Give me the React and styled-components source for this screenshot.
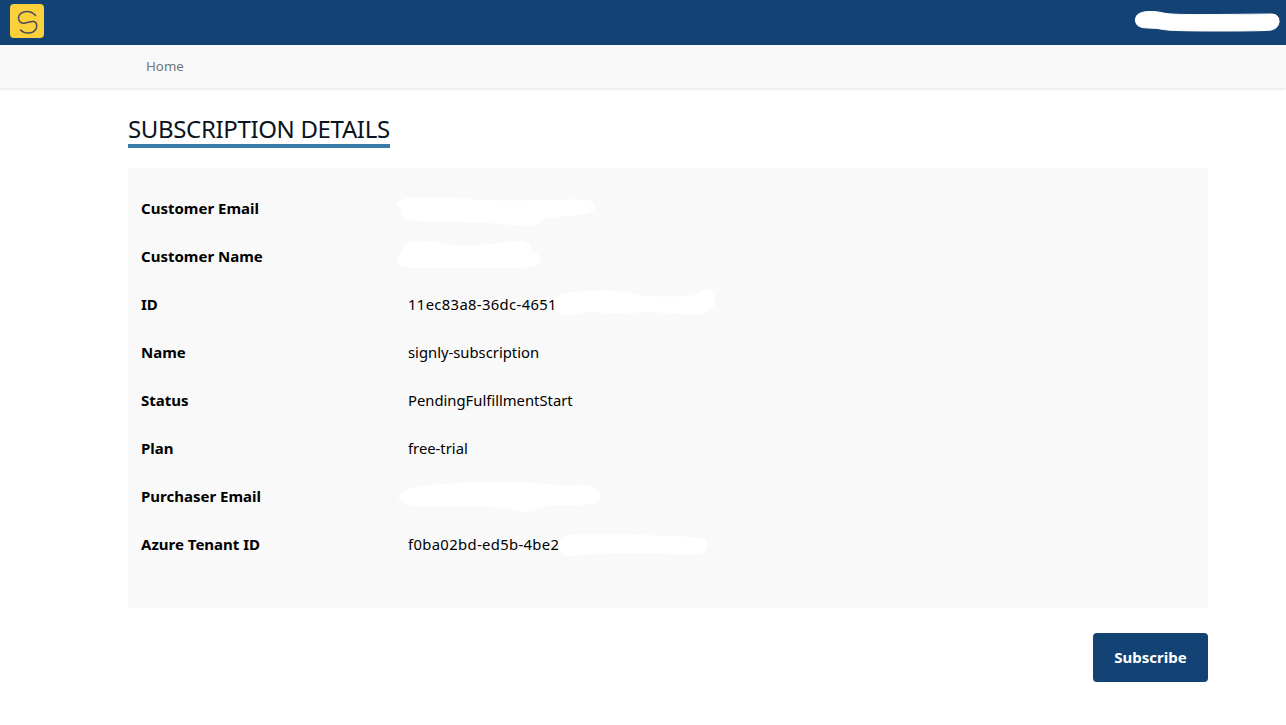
import React from "react";
import styled, { createGlobalStyle } from "styled-components";

const Global = createGlobalStyle`
  html, body { margin: 0; padding: 0; background: #fff; }
  body { font-family: "Noto Sans", "Open Sans", sans-serif; color: #000; }
`;

const Page = styled.div`
  width: 1286px;
  height: 725px;
  overflow: hidden;
  display: flex;
  flex-direction: column;
`;
const TopBar = styled.header`
  position: relative;
  height: 45px;
  flex: none;
  background: #134374;
  display: flex;
  align-items: flex-start;
  padding: 4px 10px 0;
  box-sizing: border-box;
`;
const NavBar = styled.nav`
  height: 43px;
  flex: none;
  background: #f9f9f9;
  box-shadow: 0 1px 3px rgba(0, 0, 0, 0.12);
  display: flex;
  align-items: center;
  padding: 0 0 2px 146px;
  box-sizing: border-box;
`;
const NavLink = styled.a`
  font-size: 13.3px;
  color: #6c757d;
`;
const Main = styled.main`
  padding: 26px 78px 0 128px;
  display: flex;
  flex-direction: column;
  align-items: stretch;
`;
const Title = styled.h1`
  align-self: flex-start;
  margin: 0;
  font-size: 24px;
  letter-spacing: -0.35px;
  font-weight: 400;
  line-height: 30px;
  color: #0b1220;
  border-bottom: 4px solid #3a7ca5;
`;
const Panel = styled.section`
  margin-top: 20px;
  height: 440px;
  background: #f9f9f9;
  padding-top: 16px;
  box-sizing: border-box;
`;
const Row = styled.div`
  position: relative;
  height: 48px;
  display: grid;
  grid-template-columns: 267px 1fr;
  align-items: center;
  padding: 0 0 1px 13px;
  box-sizing: border-box;
`;
const Label = styled.div`
  font-size: 15px;
  font-weight: 700;
`;
const Value = styled.div`
  font-size: 14.8px;
  font-weight: 400;
  letter-spacing: ${(p) => (p.$hex ? "0.35px" : "0")};
`;
const Mask = styled.svg`
  position: absolute;
  left: 0;
  top: 0;
  overflow: visible;
  pointer-events: none;
`;
const HeaderMask = styled.svg`
  position: absolute;
  left: 1130px;
  top: 8px;
`;
const Actions = styled.div`
  margin-top: 25px;
  display: flex;
  justify-content: flex-end;
`;
const SubscribeButton = styled.button`
  width: 115px;
  height: 49px;
  border: 0;
  border-radius: 4px;
  background: #134374;
  color: #fff;
  font-family: inherit;
  font-size: 15px;
  font-weight: 700;
  padding: 0 0 2px;
`;

const Logo = () => (
  <svg width="34" height="34" viewBox="0 0 34 34">
    <rect width="34" height="34" rx="4" fill="#fbd03b" />
    <path
      d="M25.5 11.5C23 8.5 20 7.5 17 7.5C12 7.5 8.5 10.5 8.5 14C8.5 18 12 20 15 19C18 18 21 17 24 17.5C26.5 18.5 27 21 26.5 23.5C25.5 27 22 29 18 29C15 29 12.5 28 10.5 26"
      fill="none"
      stroke="#4a4a5c"
      strokeWidth="1.5"
      strokeLinecap="round"
    />
  </svg>
);

// Rounds a closed list of points into a soft marker-stroke outline.
const smooth = (pts) => {
  const mid = (a, b) => [(a[0] + b[0]) / 2, (a[1] + b[1]) / 2];
  const n = pts.length;
  const start = mid(pts[n - 1], pts[0]);
  let d = `M${start[0]} ${start[1]}`;
  pts.forEach((p, i) => {
    const m = mid(p, pts[(i + 1) % n]);
    d += `Q${p[0]} ${p[1]} ${m[0]} ${m[1]}`;
  });
  return d + "Z";
};

const rows = [
  { label: "Customer Email", blot: [[397,202],[410,197],[460,198],[483,201],[540,201],[588,199],[596,205],[591,214],[550,217],[543,218],[538,226],[516,225],[483,222],[410,221],[402,218],[402,210],[396,205]] },
  { label: "Customer Name", blot: [[404,245],[413,241],[433,241],[457,247],[490,245],[520,240],[530,244],[530,252],[540,255],[540,264],[530,268],[410,268],[399,265],[397,258],[402,253]] },
  { label: "ID", value: "11ec83a8-36dc-4651", hex: true, blot: [[554,294],[587,291],[623,291],[643,297],[697,297],[703,288],[713,291],[716,303],[708,313],[697,315],[650,311],[607,314],[590,310],[577,315],[559,315],[554,307]] },
  { label: "Name", value: "signly-subscription" },
  { label: "Status", value: "PendingFulfillmentStart" },
  { label: "Plan", value: "free-trial" },
  { label: "Purchaser Email", blot: [[399,495],[410,487],[457,483],[523,482],[557,486],[592,485],[600,492],[600,500],[591,505],[537,505],[535,512],[512,511],[508,506],[410,507],[399,501]] },
  { label: "Azure Tenant ID", value: "f0ba02bd-ed5b-4be2", hex: true, blot: [[559,542],[568,534],[577,536],[623,535],[702,537],[708,543],[706,552],[698,555],[640,552],[590,553],[566,557],[558,550]] },
];

const headerBlot = [[1134,20],[1139,12],[1157,11],[1170,15],[1267,14],[1277,14],[1280,22],[1276,29],[1267,31],[1170,31],[1157,28],[1139,28]];

export default function App() {
  return (
    <Page>
      <Global />
      <TopBar>
        <Logo />
        <HeaderMask width="152" height="26" viewBox="1130 8 152 26">
          <path d={smooth(headerBlot)} fill="#fff" stroke="#fff" strokeWidth="1" strokeLinejoin="round" />
        </HeaderMask>
      </TopBar>
      <NavBar>
        <NavLink>Home</NavLink>
      </NavBar>
      <Main>
        <Title>SUBSCRIPTION DETAILS</Title>
        <Panel>
          {rows.map((r, i) => (
            <Row key={r.label}>
              <Label>{r.label}</Label>
              <Value $hex={r.hex}>{r.value}</Value>
              {r.blot && (
                <Mask width="1080" height="48" viewBox={`128 ${184 + i * 48} 1080 48`}>
                  <path d={smooth(r.blot)} fill="#fff" stroke="#fff" strokeWidth="1" strokeLinejoin="round" />
                </Mask>
              )}
            </Row>
          ))}
        </Panel>
        <Actions>
          <SubscribeButton>Subscribe</SubscribeButton>
        </Actions>
      </Main>
    </Page>
  );
}
